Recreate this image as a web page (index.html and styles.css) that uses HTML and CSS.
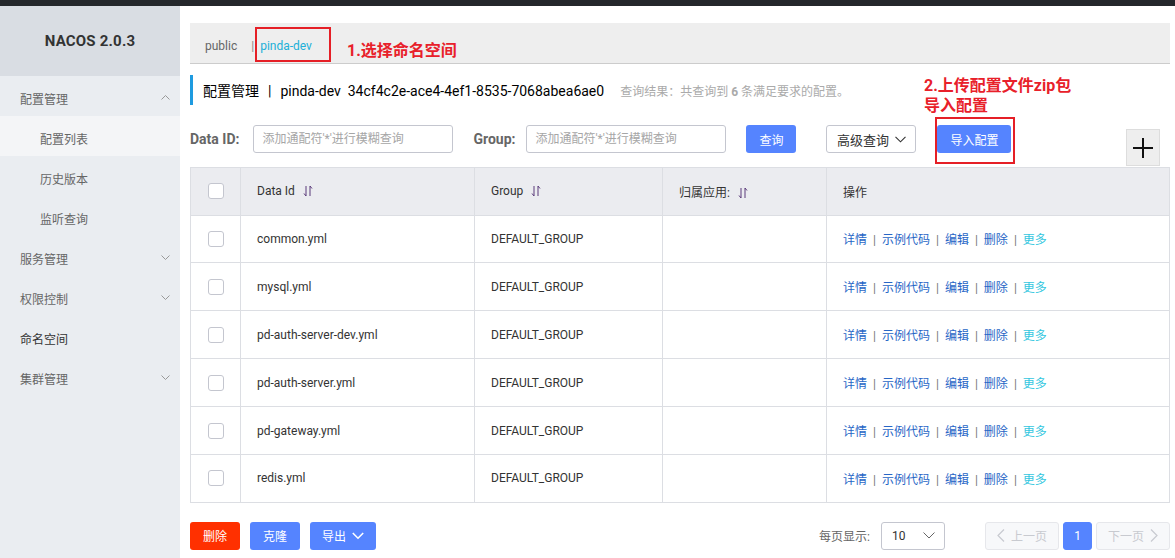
FILE: index.html
```html
<!DOCTYPE html>
<html lang="zh-CN">
<head>
<meta charset="utf-8">
<title>NACOS 2.0.3</title>
<link rel="stylesheet" href="styles.css">
</head>
<body>
<div class="topbar"></div>
<div class="layout">
  <aside class="sidebar">
    <div class="logo">NACOS 2.0.3</div>
    <ul class="menu">
      <li class="menu-item group">配置管理<svg class="chev" width="9" height="5" viewBox="0 0 9 5"><polyline points="0.5,4.5 4.5,0.5 8.5,4.5" fill="none" stroke="#999" stroke-width="1"/></svg></li>
      <li class="menu-item sub active">配置列表</li>
      <li class="menu-item sub">历史版本</li>
      <li class="menu-item sub">监听查询</li>
      <li class="menu-item group">服务管理<svg class="chev" width="9" height="5" viewBox="0 0 9 5"><polyline points="0.5,0.5 4.5,4.5 8.5,0.5" fill="none" stroke="#999" stroke-width="1"/></svg></li>
      <li class="menu-item group">权限控制<svg class="chev" width="9" height="5" viewBox="0 0 9 5"><polyline points="0.5,0.5 4.5,4.5 8.5,0.5" fill="none" stroke="#999" stroke-width="1"/></svg></li>
      <li class="menu-item group dark">命名空间</li>
      <li class="menu-item group">集群管理<svg class="chev" width="9" height="5" viewBox="0 0 9 5"><polyline points="0.5,0.5 4.5,4.5 8.5,0.5" fill="none" stroke="#999" stroke-width="1"/></svg></li>
    </ul>
  </aside>
  <main class="main">
    <div class="ns-bar">
      <span class="ns">public</span><span class="ns-sep">|</span><span class="ns ns-active">pinda-dev</span>
    </div>
    <div class="title-bar">
      <span class="title-text">配置管理<span class="title-sep">|</span>pinda-dev&nbsp; 34cf4c2e-ace4-4ef1-8535-7068abea6ae0</span>
      <span class="result">查询结果：共查询到 <b>6</b> 条满足要求的配置。</span>
    </div>
    <div class="search-row">
      <label class="lbl lbl-id">Data ID:</label>
      <input class="inp" type="text" placeholder="添加通配符'*'进行模糊查询">
      <label class="lbl lbl-group">Group:</label>
      <input class="inp" type="text" placeholder="添加通配符'*'进行模糊查询">
      <button class="btn btn-primary btn-query">查询</button>
      <button class="btn btn-normal btn-adv">高级查询<svg class="btn-chev" width="11" height="7" viewBox="0 0 11 7"><polyline points="0.5,0.8 5.5,5.8 10.5,0.8" fill="none" stroke="#333" stroke-width="1.1"/></svg></button>
      <button class="btn btn-primary btn-import">导入配置</button>
      <button class="btn-plus"><svg width="20" height="20" viewBox="0 0 20 20"><rect x="0" y="9" width="20" height="2" fill="#111"/><rect x="9" y="0" width="2" height="20" fill="#111"/></svg></button>
    </div>
    <table class="grid">
      <colgroup>
        <col style="width:50px"><col style="width:234px"><col style="width:188px"><col style="width:164px"><col style="width:343px">
      </colgroup>
      <thead>
        <tr>
          <th class="c-check"><span class="cb"></span></th>
          <th>Data Id<svg class="sort" width="10" height="12" viewBox="0 0 10 12"><path d="M3 1 V11 L1 8.5 M7 11 V1 L9 3.5" fill="none" stroke="#5a3a7a" stroke-width="1"/></svg></th>
          <th>Group<svg class="sort" width="10" height="12" viewBox="0 0 10 12"><path d="M3 1 V11 L1 8.5 M7 11 V1 L9 3.5" fill="none" stroke="#5a3a7a" stroke-width="1"/></svg></th>
          <th>归属应用:<svg class="sort" width="10" height="12" viewBox="0 0 10 12"><path d="M3 1 V11 L1 8.5 M7 11 V1 L9 3.5" fill="none" stroke="#5a3a7a" stroke-width="1"/></svg></th>
          <th>操作</th>
        </tr>
      </thead>
      <tbody>
        <tr><td class="c-check"><span class="cb"></span></td><td>common.yml</td><td>DEFAULT_GROUP</td><td></td><td class="ops"><a>详情</a><span class="sep">|</span><a>示例代码</a><span class="sep">|</span><a>编辑</a><span class="sep">|</span><a>删除</a><span class="sep">|</span><a class="more">更多</a></td></tr>
        <tr><td class="c-check"><span class="cb"></span></td><td>mysql.yml</td><td>DEFAULT_GROUP</td><td></td><td class="ops"><a>详情</a><span class="sep">|</span><a>示例代码</a><span class="sep">|</span><a>编辑</a><span class="sep">|</span><a>删除</a><span class="sep">|</span><a class="more">更多</a></td></tr>
        <tr><td class="c-check"><span class="cb"></span></td><td>pd-auth-server-dev.yml</td><td>DEFAULT_GROUP</td><td></td><td class="ops"><a>详情</a><span class="sep">|</span><a>示例代码</a><span class="sep">|</span><a>编辑</a><span class="sep">|</span><a>删除</a><span class="sep">|</span><a class="more">更多</a></td></tr>
        <tr><td class="c-check"><span class="cb"></span></td><td>pd-auth-server.yml</td><td>DEFAULT_GROUP</td><td></td><td class="ops"><a>详情</a><span class="sep">|</span><a>示例代码</a><span class="sep">|</span><a>编辑</a><span class="sep">|</span><a>删除</a><span class="sep">|</span><a class="more">更多</a></td></tr>
        <tr><td class="c-check"><span class="cb"></span></td><td>pd-gateway.yml</td><td>DEFAULT_GROUP</td><td></td><td class="ops"><a>详情</a><span class="sep">|</span><a>示例代码</a><span class="sep">|</span><a>编辑</a><span class="sep">|</span><a>删除</a><span class="sep">|</span><a class="more">更多</a></td></tr>
        <tr><td class="c-check"><span class="cb"></span></td><td>redis.yml</td><td>DEFAULT_GROUP</td><td></td><td class="ops"><a>详情</a><span class="sep">|</span><a>示例代码</a><span class="sep">|</span><a>编辑</a><span class="sep">|</span><a>删除</a><span class="sep">|</span><a class="more">更多</a></td></tr>
      </tbody>
    </table>
    <div class="footer">
      <button class="btn btn-danger btn-del">删除</button>
      <button class="btn btn-primary btn-clone">克隆</button>
      <button class="btn btn-primary btn-export">导出<svg class="btn-chev" width="12" height="8" viewBox="0 0 12 8"><polyline points="0.8,1 6,6.2 11.2,1" fill="none" stroke="#fff" stroke-width="1.6"/></svg></button>
      <div class="pager">
        <span class="per">每页显示:</span>
        <div class="select"><span>10</span><svg width="12" height="7" viewBox="0 0 12 7"><polyline points="0.5,0.5 6,6 11.5,0.5" fill="none" stroke="#666" stroke-width="1"/></svg></div>
        <button class="pg pg-prev" disabled><svg width="8" height="13" viewBox="0 0 8 13"><polyline points="7,0.5 1,6.5 7,12.5" fill="none" stroke="#c8cad0" stroke-width="1.2"/></svg>上一页</button>
        <button class="pg pg-cur">1</button>
        <button class="pg pg-next" disabled>下一页<svg width="8" height="13" viewBox="0 0 8 13"><polyline points="1,0.5 7,6.5 1,12.5" fill="none" stroke="#c8cad0" stroke-width="1.2"/></svg></button>
      </div>
    </div>
  </main>
</div>

<div class="mark mark-ns"></div>
<div class="note note-ns">1.选择命名空间</div>
<div class="note note-import">2.上传配置文件zip包<br>导入配置</div>
<div class="mark mark-import"></div>
</body>
</html>
```

FILE: styles.css
```css
* { box-sizing: border-box; }
html, body { margin: 0; padding: 0; }
body {
  width: 1175px;
  height: 558px;
  overflow: hidden;
  background: #fff;
  font-family: Roboto, "Noto Sans CJK SC", sans-serif;
  font-size: 12px;
  color: #333;
  position: relative;
}
.topbar { height: 6px; background: #24272b; }
.layout { display: flex; height: 552px; }

/* sidebar */
.sidebar { width: 180px; flex: none; background: #eaedf1; }
.logo {
  height: 70px;
  background: #d9dde3;
  display: flex; align-items: center; justify-content: center;
  font-weight: bold; font-size: 15px; color: #333; letter-spacing: 0.2px;
}
.menu { list-style: none; margin: 0; padding: 0; }
.menu-item {
  height: 40px;
  display: flex; align-items: center; justify-content: space-between;
  padding: 4px 10px 0 20px;
  font-size: 12px; color: #666;
}
.menu-item.sub { padding-left: 40px; }
.menu-item.active { background: #f4f5f7; }
.menu-item.dark { color: #333; }
.chev { margin-top: -2px; }

/* main */
.main { flex: 1; padding: 17px 6px 0 10px; }
.ns-bar {
  height: 41px;
  background: #eee;
  border-bottom: 1px solid #ccc;
  display: flex; align-items: center;
  padding: 6px 0 0 15px;
  font-size: 12px;
}
.ns { color: #666; }
.ns-sep { color: #888; margin: 0 6px 0 14px; }
.ns-active { color: #21b0d8; }

.title-bar {
  margin-top: 11px;
  height: 30px;
  border-left: 3px solid #1e9be0;
  padding-left: 10px;
  display: flex; align-items: center;
}
.title-text { font-size: 14px; color: #000; }
.title-sep { margin: 0 9px; }
.result { margin-left: 16px; font-size: 12px; color: #aaa; }
.result b { color: #aaa; }

.search-row {
  margin-top: 20px;
  display: flex; align-items: flex-start;
}
.lbl { font-size: 14px; font-weight: bold; color: #666; line-height: 28px; }
.lbl-id { margin-right: 14px; }
.lbl-group { margin-left: 20px; margin-right: 11px; }
.inp {
  width: 200px; height: 28px;
  border: 1px solid #c4c6cf; border-radius: 3px;
  padding: 0 8px;
  font-family: Roboto, "Noto Sans CJK SC", sans-serif;
  font-size: 12px; color: #333; outline: none;
}
.inp::placeholder { color: #a6a6a6; }
.btn {
  height: 28px;
  border-radius: 3px;
  border: 1px solid transparent;
  font-family: Roboto, "Noto Sans CJK SC", sans-serif;
  font-size: 12px;
  display: inline-flex; align-items: center; justify-content: center;
  padding: 0; cursor: pointer;
}
.btn-primary { background: #5584ff; color: #fff; }
.btn-danger { background: #ff3000; color: #fff; }
.btn-normal { background: #fff; color: #333; border-color: #c4c6cf; }
.btn-query { width: 50px; margin-left: 20px; }
.btn-adv { width: 90px; margin-left: 30px; font-size: 13px; }
.btn-adv .btn-chev { margin-left: 6px; }
.btn-import { width: 74px; margin-left: 21px; }
.btn-plus {
  margin-left: auto; margin-right: 10px; margin-top: 4px;
  width: 34px; height: 37px;
  background: #eee; border: 1px solid #ddd;
  display: flex; align-items: center; justify-content: center;
  padding: 0;
}

/* table */
.grid {
  margin-top: 1px;
  width: 979px;
  table-layout: fixed;
  border-collapse: collapse;
  border: 1px solid #dcdee3;
}
.grid th, .grid td {
  padding: 0 16px;
  border: 1px solid #dcdee3;
  text-align: left;
  font-weight: normal;
  font-size: 12px;
  color: #333;
  white-space: nowrap;
}
.grid th { background: #ebecf0; height: 47.5px; }
.grid td { height: 47.9px; }
.grid .c-check { padding: 0; text-align: center; }
.cb {
  display: inline-block; vertical-align: middle;
  width: 16px; height: 16px;
  border: 1px solid #c4c6cf; border-radius: 3px; background: #fff;
}
.sort { vertical-align: -2px; margin-left: 8px; }
.ops a { color: #2766c6; }
.ops a.more { color: #34c7e0; }
.ops .sep { color: #777; margin: 0 6px; }

/* footer */
.footer { margin-top: 19px; display: flex; align-items: center; }
.btn-del { width: 50px; }
.btn-clone { width: 50px; margin-left: 10px; }
.btn-export { width: 66px; margin-left: 10px; }
.btn-export .btn-chev { margin-left: 6px; }
.pager { margin-left: auto; display: flex; align-items: center; }
.per { color: #666; font-size: 12px; }
.select {
  margin-left: 11px;
  width: 64px; height: 28px;
  border: 1px solid #c4c6cf; border-radius: 3px;
  display: flex; align-items: center; justify-content: space-between;
  padding: 0 9px 0 10px;
  color: #333;
}
.pg {
  height: 28px;
  border-radius: 3px;
  font-family: Roboto, "Noto Sans CJK SC", sans-serif;
  font-size: 12px;
  display: inline-flex; align-items: center; justify-content: center;
  padding: 0;
}
.pg-prev, .pg-next {
  width: 74px;
  background: #f7f8fa; border: 1px solid #e6e7eb; color: #c8cad0;
}
.pg-prev { margin-left: 40px; }
.pg-prev svg { margin-right: 6px; }
.pg-next svg { margin-left: 6px; }
.pg-cur {
  width: 29px; margin: 0 4px;
  background: #5584ff; border: 1px solid #5584ff; color: #fff;
}

/* annotations overlay */
.mark { position: absolute; border: 2px solid #e51f26; }
.mark-ns { left: 255px; top: 27px; width: 76px; height: 35px; }
.mark-import { left: 935px; top: 117px; width: 80px; height: 47px; }
.note {
  position: absolute;
  color: #e8202a;
  font-weight: bold;
  font-size: 16px;
  line-height: 20px;
}
.note-ns { left: 347px; top: 41px; }
.note-import { left: 924px; top: 76px; }
```
